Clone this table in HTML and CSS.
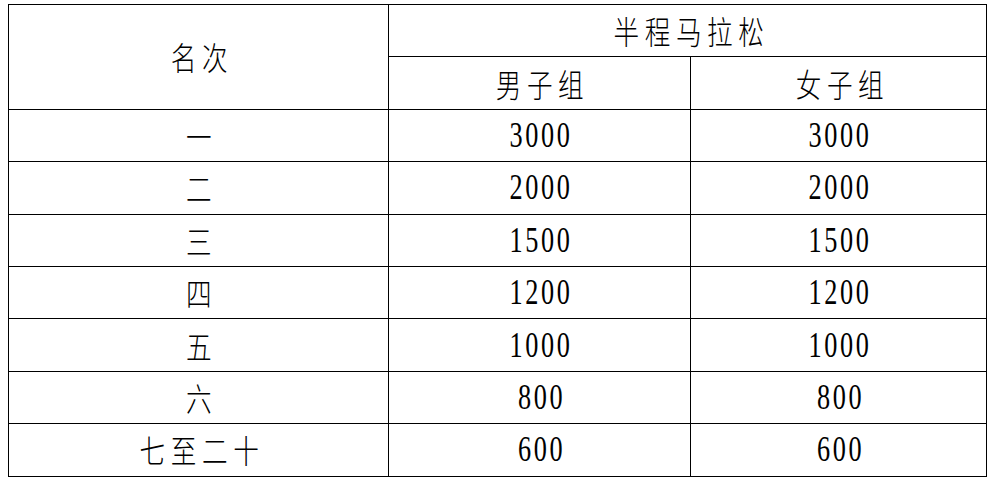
FILE: index.html
```html
<!DOCTYPE html>
<html lang="zh">
<head>
<meta charset="utf-8">
<link rel="stylesheet" href="styles.css">
</head>
<body>
<table class="prize">
  <colgroup>
    <col class="c-rank">
    <col class="c-men">
    <col class="c-women">
  </colgroup>
  <tr>
    <td rowspan="2"><span class="cjk">名次</span></td>
    <td colspan="2"><span class="cjk">半程马拉松</span></td>
  </tr>
  <tr>
    <td><span class="cjk">男子组</span></td>
    <td><span class="cjk">女子组</span></td>
  </tr>
  <tr><td><span class="cjk">一</span></td><td><span class="num">3000</span></td><td><span class="num">3000</span></td></tr>
  <tr><td><span class="cjk">二</span></td><td><span class="num">2000</span></td><td><span class="num">2000</span></td></tr>
  <tr><td><span class="cjk">三</span></td><td><span class="num">1500</span></td><td><span class="num">1500</span></td></tr>
  <tr><td><span class="cjk">四</span></td><td><span class="num">1200</span></td><td><span class="num">1200</span></td></tr>
  <tr><td><span class="cjk">五</span></td><td><span class="num">1000</span></td><td><span class="num">1000</span></td></tr>
  <tr><td><span class="cjk">六</span></td><td><span class="num">800</span></td><td><span class="num">800</span></td></tr>
  <tr><td><span class="cjk">七至二十</span></td><td><span class="num">600</span></td><td><span class="num">600</span></td></tr>
</table>
</body>
</html>
```
FILE: styles.css
```css
html, body {
  background: #ffffff;
}
body {
  margin: 4px 8px;
  font-family: "Liberation Serif", "Noto Sans CJK SC", serif;
  color: #000;
}
.prize {
  border-collapse: collapse;
  width: 978px;
  table-layout: fixed;
}
.c-rank { width: 380px; }
.c-men { width: 302px; }
.c-women { width: 296px; }
.prize td {
  border: 1px solid #000;
  height: 51.4px;
  padding: 0;
  text-align: center;
  vertical-align: middle;
  white-space: nowrap;
  line-height: 1;
}
.cjk {
  display: inline-block;
  font-family: "Noto Sans CJK SC", sans-serif;
  font-weight: 300;
  font-size: 32px;
  letter-spacing: 7px;
  margin-right: -7px;
  transform: scaleX(0.8);
}
.num {
  display: inline-block;
  font-family: "Liberation Serif", serif;
  font-size: 35px;
  letter-spacing: 3.5px;
  margin-right: -3.5px;
  transform: scaleX(0.75);
}
```
